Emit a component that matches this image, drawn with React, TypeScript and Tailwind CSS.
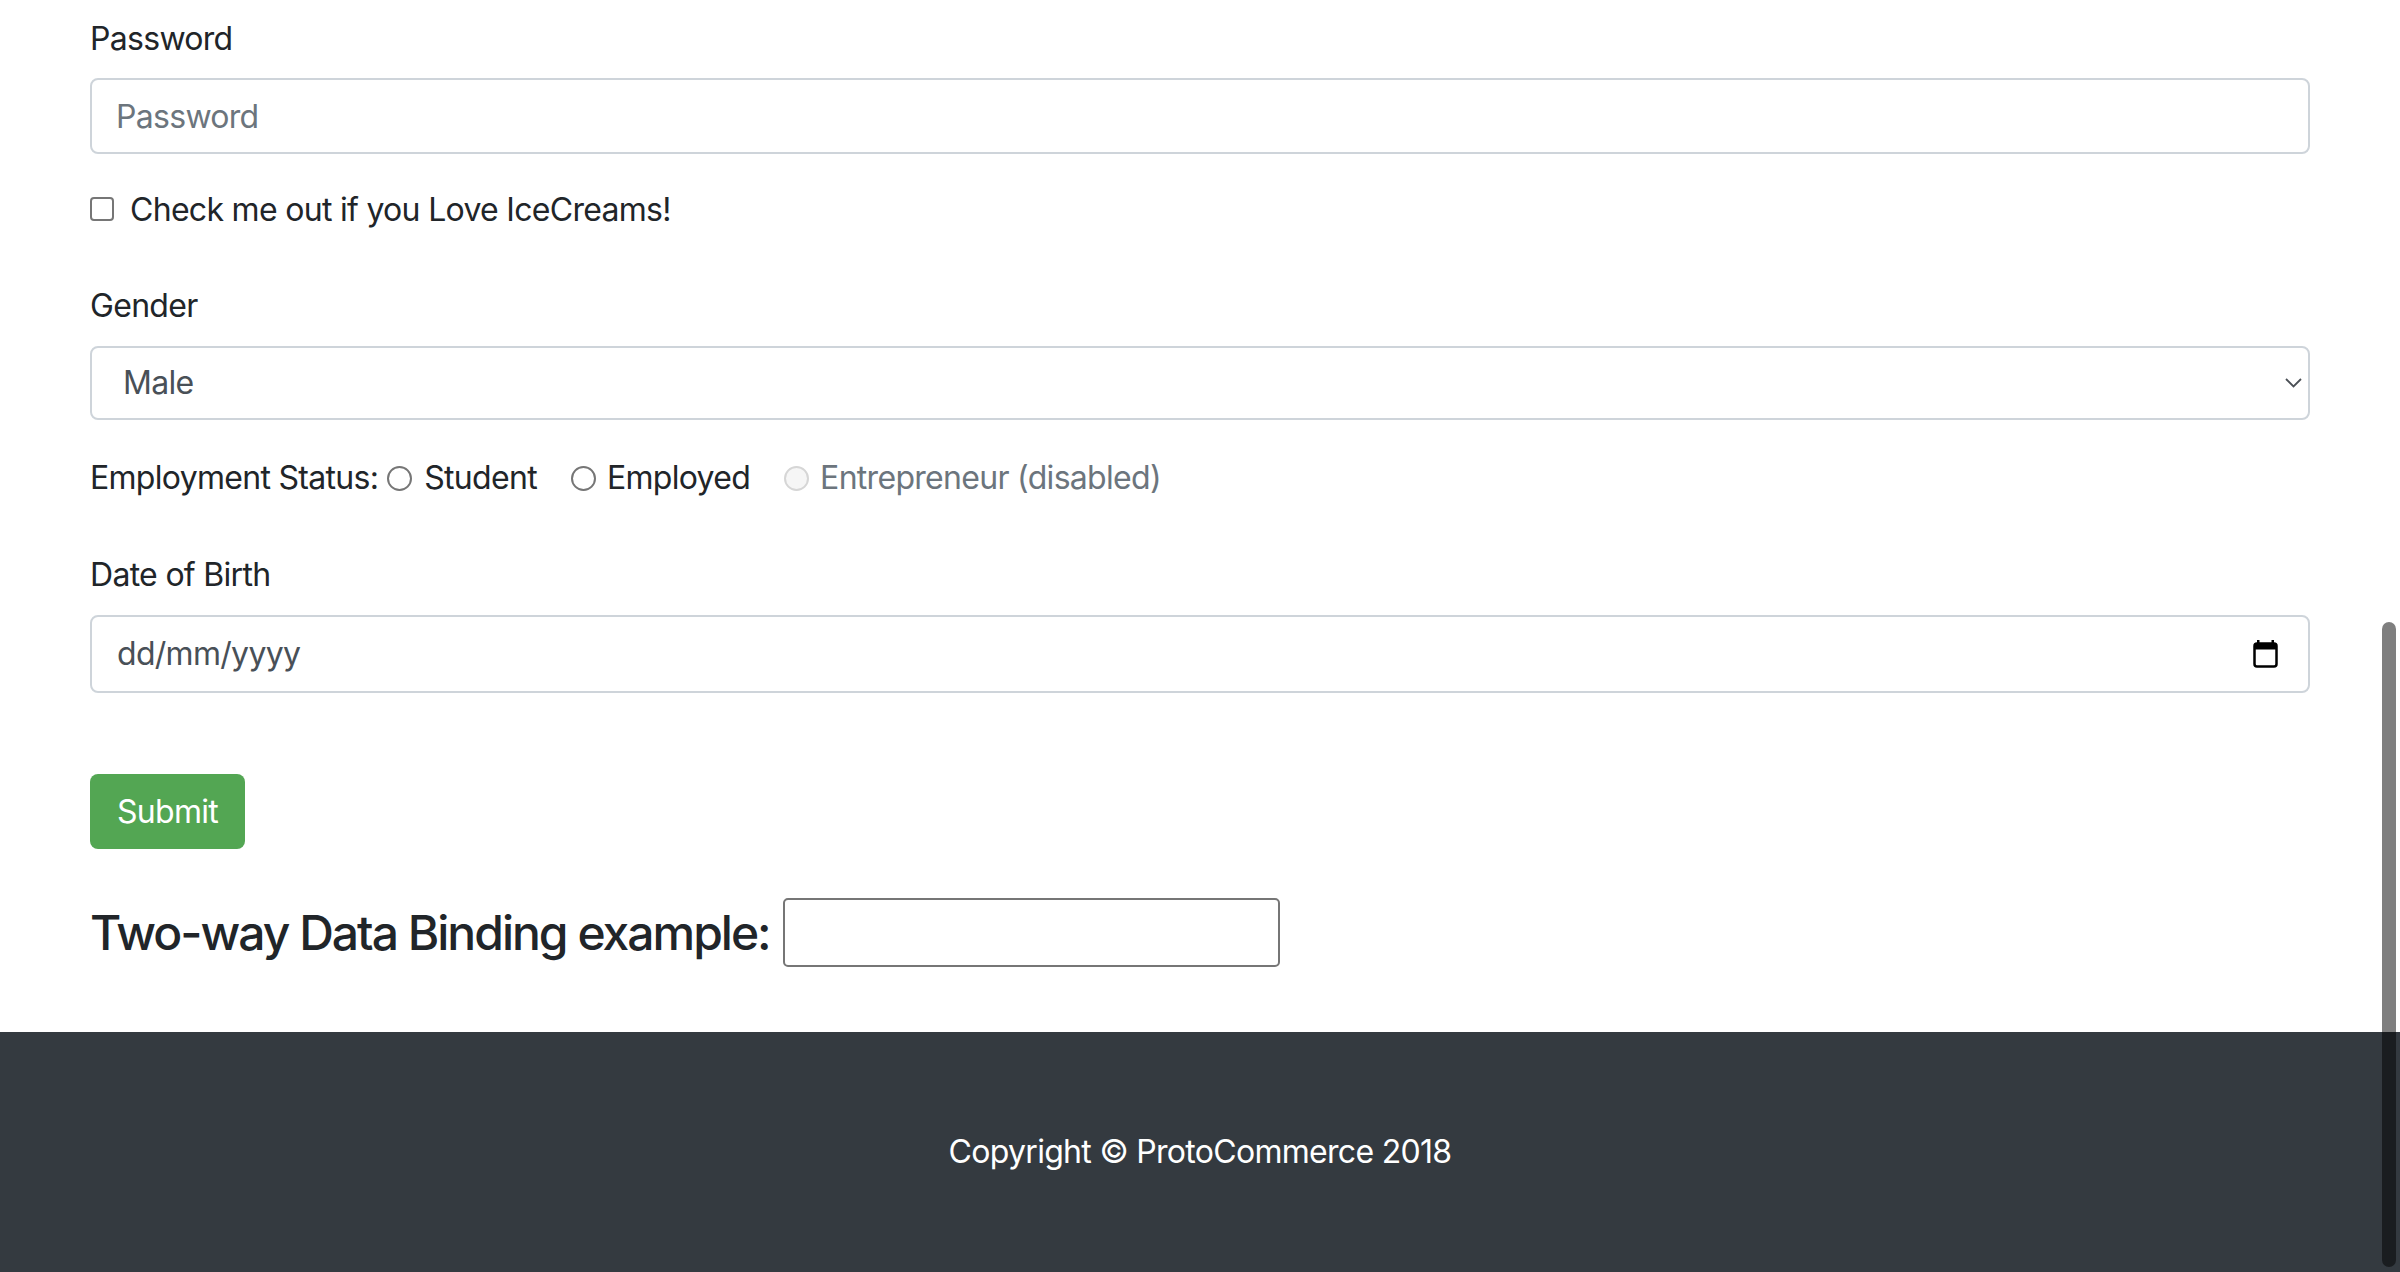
import React, { useState } from "react";

const CalendarIcon = () => (
    <svg width="25" height="28" viewBox="0 0 25 28" fill="none">
        <rect x="4" y="0" width="2.5" height="4" fill="#000" />
        <rect x="18.5" y="0" width="2.5" height="4" fill="#000" />
        <rect x="1.5" y="3.5" width="22" height="23" rx="2.5" stroke="#000" strokeWidth="2.5" />
        <rect x="1.5" y="3.5" width="22" height="6" fill="#000" />
    </svg>
)

const Chevron = () => (
    <svg width="17" height="10" viewBox="0 0 17 10" fill="none">
        <path d="M1 1l7.5 7.5L16 1" stroke="#4b5056" strokeWidth="1.8" />
    </svg>
)

const Radio = ({ disabled }: { disabled?: boolean }) => (
    <span
        className={
            disabled
                ? "inline-block w-[25px] h-[25px] rounded-full border-2 border-[#d6d6d6] bg-[#f6f6f6]"
                : "inline-block w-[25px] h-[25px] rounded-full border-2 border-[#767676] bg-white"
        }
    />
)

export default function App() {
    const [name, setName] = useState("")
    const [loves, setLoves] = useState(false)

    return (
        <div className="relative h-[1272px] overflow-hidden bg-white text-[#212529] font-['Inter',sans-serif] tracking-[-0.7px]">
            <div className="px-[90px] pt-[15px]">
                <label className="block h-[48px] text-[32px] leading-[48px] mb-[15px]">Password</label>
                <input
                    type="password"
                    placeholder="Password"
                    className="block w-full h-[76px] border-2 border-[#ced4da] rounded-[8px] px-[24px] text-[32px] text-[#495057] placeholder:text-[#6c757d] outline-none"
                />

                <div className="flex items-center h-[48px] mt-[32px] cursor-pointer" onClick={() => setLoves(!loves)}>
                    <span className="inline-block w-[24px] h-[24px] border-2 border-[#767676] rounded-[4px] bg-white -mt-[3px]" />
                    <span className="ml-[16px] text-[32px] leading-[48px]">Check me out if you Love IceCreams!</span>
                </div>

                <label className="block h-[48px] text-[32px] leading-[48px] mt-[48px] mb-[16px]">Gender</label>
                <div className="relative">
                    <select className="block w-full h-[74px] appearance-none border-2 border-[#ced4da] rounded-[8px] pl-[31px] text-[32px] text-[#495057] bg-white outline-none">
                        <option>Male</option>
                        <option>Female</option>
                    </select>
                    <span className="absolute right-[8px] top-[32px] pointer-events-none">
                        <Chevron />
                    </span>
                </div>

                <div className="flex items-center h-[48px] mt-[34px] text-[32px] leading-[48px]">
                    <span>Employment Status:</span>
                    <span className="ml-[9px] flex items-center"><Radio /></span>
                    <span className="ml-[12px]">Student</span>
                    <span className="ml-[34px] flex items-center"><Radio /></span>
                    <span className="ml-[11px]">Employed</span>
                    <span className="ml-[34px] flex items-center"><Radio disabled /></span>
                    <span className="ml-[11px] text-[#6c757d]">Entrepreneur (disabled)</span>
                </div>

                <label className="block h-[48px] text-[32px] leading-[48px] mt-[49px] mb-[16px]">Date of Birth</label>
                <div className="flex items-center justify-between w-full h-[78px] border-2 border-[#ced4da] rounded-[8px] pl-[25px] pr-[30px]">
                    <span className="text-[32px] text-[#495057]">dd/mm/yyyy</span>
                    <CalendarIcon />
                </div>

                <button className="block mt-[81px] h-[75px] px-[27px] rounded-[8px] bg-[#53a653] text-white text-[32px] leading-[48px]">
                    Submit
                </button>

                <div className="flex items-center mt-[49px] h-[69px]">
                    <h3 className="text-[48px] font-medium leading-[58px] tracking-[-2px]">Two-way Data Binding example:</h3>
                    <input
                        value={name}
                        onChange={e => setName(e.target.value)}
                        className="ml-[13px] w-[497px] h-[69px] border-2 border-[#767676] rounded-[5px] px-[6px] text-[40px] outline-none"
                    />
                </div>
            </div>

            <footer className="mt-[65px] h-[240px] bg-[#343a40] flex items-center justify-center">
                <p className="text-white text-[32px] leading-[48px]">Copyright © ProtoCommerce 2018</p>
            </footer>

            <div className="absolute right-[4px] top-[622px] w-[14px] h-[645px] rounded-full bg-black/50" />
        </div>
    )
}
